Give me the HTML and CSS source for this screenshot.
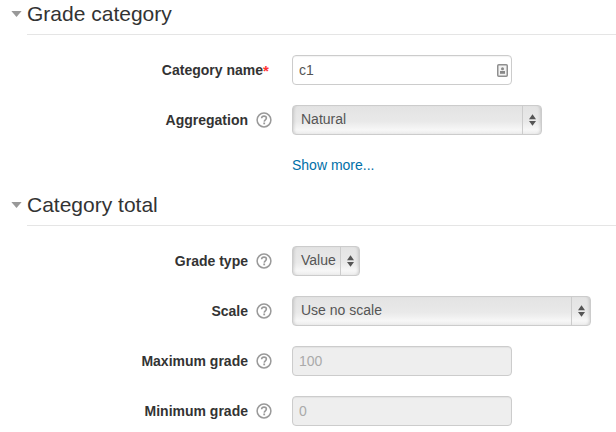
FILE: index.html
```html
<!DOCTYPE html>
<html lang="en">
<head>
<meta charset="utf-8">
<title>Grade category</title>
<link rel="stylesheet" href="styles.css">
</head>
<body>
<section class="section first">
  <h2 class="legend"><svg class="caret" viewBox="0 0 12 7"><path d="M0 0H12L6 7Z"/></svg><span class="legend-text">Grade category</span></h2>
  <div class="rows">
    <div class="row">
      <div class="label"><strong>Category name</strong><span class="req">*</span></div>
      <div class="control input w220"><span>c1</span>
        <svg class="lock" viewBox="0 0 11 13"><rect x="0.750" y="0.750" width="9.500" height="11.500" rx="1" fill="#f2f2f2" stroke="#8f8f8f" stroke-width="1.500"/><circle cx="5.500" cy="4.800" r="1.500" fill="#888"/><rect x="3" y="7" width="5" height="2.800" fill="#888"/></svg>
      </div>
    </div>
    <div class="row">
      <div class="label"><strong>Aggregation</strong><svg class="help" viewBox="0 0 16 16"><use href="#q"/></svg></div>
      <div class="control select w250"><span class="val">Natural</span><span class="spin"><svg viewBox="0 0 8 13"><path d="M4 0L8 5.500H0ZM4 13L0 7.500H8Z"/></svg></span></div>
    </div>
  </div>
  <div class="more"><a href="#">Show more...</a></div>
</section>
<section class="section">
  <h2 class="legend"><svg class="caret" viewBox="0 0 12 7"><path d="M0 0H12L6 7Z"/></svg><span class="legend-text">Category total</span></h2>
  <div class="rows">
    <div class="row">
      <div class="label"><strong>Grade type</strong><svg class="help" viewBox="0 0 16 16"><use href="#q"/></svg></div>
      <div class="control select w68"><span class="val">Value</span><span class="spin"><svg viewBox="0 0 8 13"><path d="M4 0L8 5.500H0ZM4 13L0 7.500H8Z"/></svg></span></div>
    </div>
    <div class="row">
      <div class="label"><strong>Scale</strong><svg class="help" viewBox="0 0 16 16"><use href="#q"/></svg></div>
      <div class="control select w299"><span class="val">Use no scale</span><span class="spin"><svg viewBox="0 0 8 13"><path d="M4 0L8 5.500H0ZM4 13L0 7.500H8Z"/></svg></span></div>
    </div>
    <div class="row">
      <div class="label"><strong>Maximum grade</strong><svg class="help" viewBox="0 0 16 16"><use href="#q"/></svg></div>
      <div class="control input disabled w220"><span>100</span></div>
    </div>
    <div class="row">
      <div class="label"><strong>Minimum grade</strong><svg class="help" viewBox="0 0 16 16"><use href="#q"/></svg></div>
      <div class="control input disabled w220"><span>0</span></div>
    </div>
  </div>
</section>
<svg class="defs" width="0" height="0"><defs><g id="q"><circle cx="8" cy="8" r="6.900" fill="#fff" stroke="#999" stroke-width="1.500"/><path d="M5.600 6.300C5.700 4.800 6.700 4.100 8 4.100C9.400 4.100 10.400 4.900 10.400 6.100C10.400 7.800 8.300 7.800 8.200 9.600" fill="none" stroke="#999" stroke-width="1.600"/><rect x="7.300" y="10.500" width="1.800" height="1.800" fill="#999"/></g></defs></svg>
</body>
</html>
```
FILE: styles.css
```css
* { box-sizing: border-box; }
html, body { margin: 0; padding: 0; }
body {
  width: 616px;
  height: 432px;
  overflow: hidden;
  background: #fff;
  color: #333;
  font-family: "Liberation Sans", Arial, sans-serif;
  font-size: 14px;
}
.defs { position: absolute; }
.legend {
  display: flex;
  align-items: center;
  margin: 0;
  height: 35px;
  padding: 0 0 7px 11px;
  font-size: 21px;
  font-weight: 400;
  line-height: 30px;
  color: #333;
  position: relative;
}
.legend::after {
  content: "";
  position: absolute;
  left: 27px;
  right: 0;
  bottom: 0;
  border-bottom: 1px solid #e5e5e5;
}
.caret { width: 11px; height: 6px; margin-right: 5px; fill: #999; }
.rows {
  display: flex;
  flex-direction: column;
  gap: 20px;
  padding-top: 20px;
}
.row { display: flex; align-items: center; height: 30px; }
.label {
  width: 292px;
  padding-right: 20px;
  display: flex;
  justify-content: flex-end;
  align-items: center;
  color: #333;
}
.label strong { font-weight: 700; font-size: 14px; }
.req { color: #f33; font-weight: 700; font-size: 15px; width: 9px; }
.help { width: 16px; height: 16px; margin: 0 0 0 8px; }
.control {
  height: 30px;
  display: flex;
  align-items: center;
  border: 1px solid #ccc;
  border-radius: 4px;
  color: #555;
  font-size: 14px;
}
.w220 { width: 220px; }
.w250 { width: 250px; }
.w68 { width: 68px; }
.w299 { width: 299px; }
.input {
  padding: 0 3px 0 6px;
  background: #fff;
  justify-content: space-between;
  box-shadow: inset 0 1px 1px rgba(0,0,0,.05);
}
.lock { width: 11px; height: 13px; }
.disabled { background: #eee; color: #aaa; }
.select {
  background: linear-gradient(#e3e3e3, #e9e9e9 55%, #f7f7f7 85%, #ececec);
  box-shadow: inset 3px 0 3px -2px rgba(0,0,0,.14), inset -3px 0 3px -2px rgba(0,0,0,.14);
  padding-left: 8px;
  justify-content: space-between;
}
.val { line-height: 20px; margin-top: -2px; }
.spin {
  width: 19px;
  height: 28px;
  border-left: 1px solid #ccc;
  display: flex;
  align-items: center;
  justify-content: center;
  flex: none;
}
.spin svg { width: 7px; height: 12px; fill: #555; }
.more { margin: 20px 0 0 292px; height: 20px; line-height: 20px; }
.more a { color: #0070a8; text-decoration: none; }
.section + .section { margin-top: 16px; }
```
